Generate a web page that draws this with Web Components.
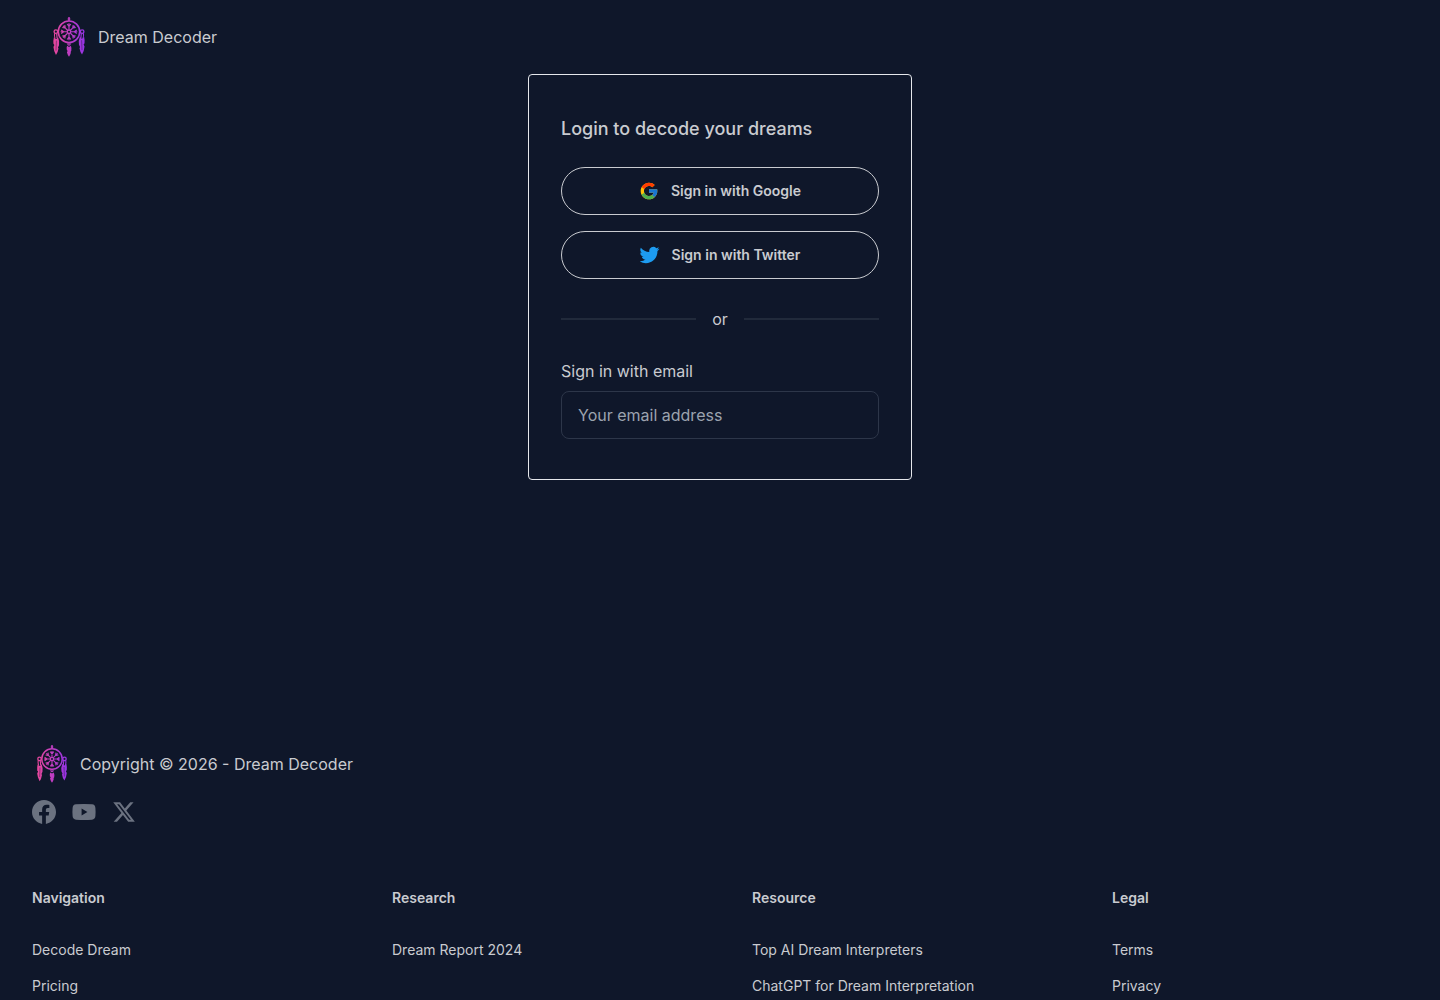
<!DOCTYPE html>
<html lang="en">
<head>
<meta charset="utf-8">
<meta name="viewport" content="width=device-width, initial-scale=1">
<title>Dream Decoder - Login</title>
<style>
  :root {
    --base: #0f172a;
    --content: #c9cbd0;
    --line: #212a3b;
    --field: #2d3649;
    --muted: #6b7280;
  }
  body {
    margin: 0;
    background: var(--base);
    color: var(--content);
    font: 16px/24px Inter, "Liberation Sans", sans-serif;
  }
</style>
</head>
<body>
<dream-page>
  <site-header slot="header"></site-header>
  <login-card></login-card>
  <site-footer slot="footer">
    <footer-column heading="Navigation">
      <footer-link href="#decode">Decode Dream</footer-link>
      <footer-link href="#pricing">Pricing</footer-link>
    </footer-column>
    <footer-column heading="Research">
      <footer-link href="#report">Dream Report 2024</footer-link>
    </footer-column>
    <footer-column heading="Resource">
      <footer-link href="#interpreters">Top AI Dream Interpreters</footer-link>
      <footer-link href="#chatgpt">ChatGPT for Dream Interpretation</footer-link>
    </footer-column>
    <footer-column heading="Legal">
      <footer-link href="#terms">Terms</footer-link>
      <footer-link href="#privacy">Privacy</footer-link>
    </footer-column>
  </site-footer>
</dream-page>

<script>
const define = (name, render) => customElements.define(name, class extends HTMLElement {
  constructor() {
    super();
    this.attachShadow({ mode: "open" });
  }
  connectedCallback() {
    this.shadowRoot.innerHTML = render(this);
  }
});

define("dream-page", () => `
  <style>
    :host { display: flex; flex-direction: column; min-height: 100vh; }
    main { flex: 1; display: flex; justify-content: center; align-items: flex-start; }
  </style>
  <slot name="header"></slot>
  <main><slot></slot></main>
  <slot name="footer"></slot>`);

define("dream-logo", () => {
  const spokes = [0, 45, 90, 135, 180, 225, 270, 315].map(a => {
    const r = a * Math.PI / 180;
    const at = (d, side) => `${(20 + d * Math.sin(r) + side * Math.cos(r)).toFixed(2)} ${(15 - d * Math.cos(r) + side * Math.sin(r)).toFixed(2)}`;
    return `<path d="M${at(2, 0)}L${at(8, 0)}M${at(7.4, -1.7)}L${at(5, 0)}L${at(7.4, 1.7)}"/>`;
  }).join("");
  return `
  <style>
    :host { display: block; flex: none; width: var(--logo-size, 40px); height: var(--logo-size, 40px); }
    svg { display: block; width: 100%; height: 100%; }
  </style>
  <svg viewBox="0 0 40 40" aria-hidden="true">
    <defs>
      <linearGradient id="g" gradientUnits="userSpaceOnUse" x1="4" y1="0" x2="36" y2="0">
        <stop offset="0" stop-color="#ec4899"/>
        <stop offset="1" stop-color="#9333ea"/>
      </linearGradient>
    </defs>
    <g fill="none" stroke="url(#g)" stroke-width="1.1">
      <circle cx="20" cy="15" r="10.2" stroke-width="1.5"/>
      <circle cx="20" cy="15" r="1.7" stroke-width="1.3"/>
      ${spokes}
      <ellipse cx="20" cy="2.9" rx=".7" ry="1.3"/>
      <circle cx="7.5" cy="14.9" r="1.7" stroke-width="1.3"/>
      <circle cx="32.5" cy="14.9" r="1.7" stroke-width="1.3"/>
      <path d="M6.4 16.4Q5.7 18.5 6.6 21M8.2 16.6Q8.6 18.5 8.6 21M33.6 16.4Q34.3 18.5 33.4 21M31.8 16.6Q31.4 18.5 31.4 21"/>
      <circle cx="20" cy="26.6" r="1.1"/>
    </g>
    <g fill="url(#g)">
      <path d="M5.6 20.5L7.8 22L9.6 20.2Q11.2 24 10.5 27.8L9.5 30L10 31Q9.4 35 7.6 37.2Q5.5 33.5 5.2 29.5L6.1 27.6L5.2 26.4Q4.9 23.5 5.6 20.5Z"/>
      <path d="M34.4 20.1L32.2 21.6L30.4 19.8Q28.8 23.6 29.5 27.4L30.5 29.6L30 30.6Q30.6 34.4 32.4 36.6Q34.5 33 34.8 29L33.9 27.2L34.8 26Q35.1 23 34.4 20.1Z"/>
      <path d="M18.2 28.4L20 29.6L21.8 28.4Q22.8 31 22.2 33.2L21.5 34.2L21.8 35Q21 37.6 20 38.8Q18.6 37 18 34.6L18.7 33.4L17.9 32.2Q17.5 30 18.2 28.4Z"/>
    </g>
    <path d="M8 23.5L7.6 33M32 23L32.4 32.5" fill="none" stroke="#0f172a" stroke-width=".4"/>
  </svg>`;
});

define("site-header", () => `
  <style>
    :host { display: block; padding: 16px 48px; }
    a { display: inline-flex; align-items: center; gap: 8px; vertical-align: top; color: inherit; text-decoration: none; }
    dream-logo { --logo-size: 42px; }
  </style>
  <a href="#home"><dream-logo></dream-logo><span>Dream Decoder</span></a>`);

define("provider-button", () => `
  <style>
    :host { display: block; }
    button {
      display: flex; align-items: center; justify-content: center; gap: 12px;
      box-sizing: border-box; width: 100%; height: 48px; padding: 0 16px;
      border: 1px solid var(--content); border-radius: 24px; background: transparent;
      color: inherit; font: 600 14px/20px Inter, "Liberation Sans", sans-serif; cursor: pointer;
    }
    ::slotted(svg) { display: block; width: 20px; height: 20px; }
  </style>
  <button type="button"><slot name="icon"></slot><span><slot></slot></span></button>`);

define("or-divider", () => `
  <style>
    :host { display: flex; align-items: center; gap: 16px; height: 16px; white-space: nowrap; }
    i { flex: 1; height: 2px; background: var(--line); }
  </style>
  <i></i><span><slot></slot></span><i></i>`);

define("login-card", () => `
  <style>
    :host {
      display: block; box-sizing: border-box; width: 100%; max-width: 384px; padding: 40px 32px;
      border: 1px solid #e5e7eb; border-radius: 4px;
    }
    h1 { margin: 0 0 24px; font-size: 18px; line-height: 28px; font-weight: 500; }
    .providers { display: grid; gap: 16px; }
    or-divider { margin: 32px 0; }
    form { display: grid; gap: 8px; }
    input {
      box-sizing: border-box; width: 100%; height: 48px; padding: 0 16px;
      border: 1px solid var(--field); border-radius: 8px; background: transparent;
      color: inherit; font: inherit;
    }
    input::placeholder { color: #9ca3af; opacity: 1; }
  </style>
  <h1>Login to decode your dreams</h1>
  <div class="providers">
    <provider-button>
      <svg slot="icon" viewBox="0 0 48 48" aria-hidden="true">
        <path fill="#FFC107" d="M43.611 20.083H42V20H24v8h11.303c-1.649 4.657-6.08 8-11.303 8-6.627 0-12-5.373-12-12s5.373-12 12-12c3.059 0 5.842 1.154 7.961 3.039l5.657-5.657C34.046 6.053 29.268 4 24 4 12.955 4 4 12.955 4 24s8.955 20 20 20 20-8.955 20-20c0-1.341-.138-2.65-.389-3.917z"/>
        <path fill="#FF3D00" d="M6.306 14.691l6.571 4.819C14.655 15.108 18.961 12 24 12c3.059 0 5.842 1.154 7.961 3.039l5.657-5.657C34.046 6.053 29.268 4 24 4 16.318 4 9.656 8.337 6.306 14.691z"/>
        <path fill="#4CAF50" d="M24 44c5.166 0 9.86-1.977 13.409-5.192l-6.19-5.238A11.91 11.91 0 0 1 24 36c-5.202 0-9.619-3.317-11.283-7.946l-6.522 5.025C9.505 39.556 16.227 44 24 44z"/>
        <path fill="#1976D2" d="M43.611 20.083H42V20H24v8h11.303a12.04 12.04 0 0 1-4.087 5.571l6.193 5.238C36.971 39.205 44 34 44 24c0-1.341-.138-2.65-.389-3.917z"/>
      </svg>Sign in with Google</provider-button>
    <provider-button>
      <svg slot="icon" viewBox="0.6 0 24 24" aria-hidden="true">
        <path fill="#1D9BF0" d="M23.953 4.57a10 10 0 0 1-2.825.775 4.958 4.958 0 0 0 2.163-2.723c-.951.555-2.005.959-3.127 1.184a4.92 4.92 0 0 0-8.384 4.482C7.69 8.095 4.067 6.13 1.64 3.162a4.822 4.822 0 0 0-.666 2.475c0 1.71.87 3.213 2.188 4.096a4.904 4.904 0 0 1-2.228-.616v.06a4.923 4.923 0 0 0 3.946 4.827 4.996 4.996 0 0 1-2.212.085 4.936 4.936 0 0 0 4.604 3.417 9.867 9.867 0 0 1-6.102 2.105c-.39 0-.779-.023-1.17-.067a13.995 13.995 0 0 0 7.557 2.209c9.053 0 13.998-7.496 13.998-13.985 0-.21 0-.42-.015-.63A9.935 9.935 0 0 0 24 4.59z"/>
      </svg>Sign in with Twitter</provider-button>
  </div>
  <or-divider>or</or-divider>
  <form>
    <label for="email">Sign in with email</label>
    <input id="email" type="email" name="email" placeholder="Your email address">
  </form>`);

define("social-links", () => `
  <style>
    :host { display: flex; gap: 16px; color: var(--muted); }
    a { display: block; color: inherit; }
    svg { display: block; width: 24px; height: 24px; fill: currentColor; }
  </style>
  <a href="#facebook" aria-label="Facebook"><svg viewBox="0 0 24 24"><path d="M24 12.073c0-6.627-5.373-12-12-12s-12 5.373-12 12c0 5.99 4.388 10.954 10.125 11.854v-8.385H7.078v-3.47h3.047V9.43c0-3.007 1.792-4.669 4.533-4.669 1.312 0 2.686.235 2.686.235v2.953H15.83c-1.491 0-1.956.925-1.956 1.874v2.25h3.328l-.532 3.47h-2.796v8.385C19.612 23.027 24 18.062 24 12.073z"/></svg></a>
  <a href="#youtube" aria-label="YouTube"><svg viewBox="0 0 24 24"><path fill-rule="evenodd" d="M4 4.3Q12 3.6 20 4.3Q23.2 4.6 23.4 8Q23.8 12 23.4 16Q23.2 19.4 20 19.7Q12 20.4 4 19.7Q.8 19.4 .6 16Q.2 12 .6 8Q.8 4.6 4 4.3ZM9.6 8.6V15.4L15.4 12Z"/></svg></a>
  <a href="#x" aria-label="X"><svg viewBox="0 0 24 24"><path d="M18.244 2.25h3.308l-7.227 8.26 8.502 11.24H16.17l-5.214-6.817L4.99 21.75H1.68l7.73-8.835L1.254 2.25H8.08l4.713 6.231zm-1.161 17.52h1.833L7.084 4.126H5.117z"/></svg></a>`);

define("site-footer", () => `
  <style>
    :host { display: grid; gap: 64px; padding: 40px 32px 4px; }
    .about { display: grid; gap: 16px; }
    .brand { display: flex; align-items: center; gap: 8px; }
    nav { display: grid; grid-template-columns: repeat(4, minmax(0, 1fr)); gap: 64px; }
    @media (max-width: 800px) { nav { grid-template-columns: repeat(2, minmax(0, 1fr)); } }
  </style>
  <footer class="about">
    <div class="brand"><dream-logo></dream-logo><span>Copyright © 2026 - Dream Decoder</span></div>
    <social-links></social-links>
  </footer>
  <nav aria-label="Footer"><slot></slot></nav>`);

define("footer-column", host => `
  <style>
    :host { display: block; font-size: 14px; line-height: 20px; }
    h2 { margin: 0 0 32px; font-size: 14px; line-height: 20px; font-weight: 600; }
    .links { display: grid; justify-items: start; gap: 16px; }
  </style>
  <h2>${host.getAttribute("heading")}</h2>
  <div class="links"><slot></slot></div>`);

define("footer-link", host => `
  <style>
    :host { display: block; }
    a { display: block; color: inherit; text-decoration: none; }
    a:hover { text-decoration: underline; }
  </style>
  <a href="${host.getAttribute("href")}"><slot></slot></a>`);
</script>
</body>
</html>
